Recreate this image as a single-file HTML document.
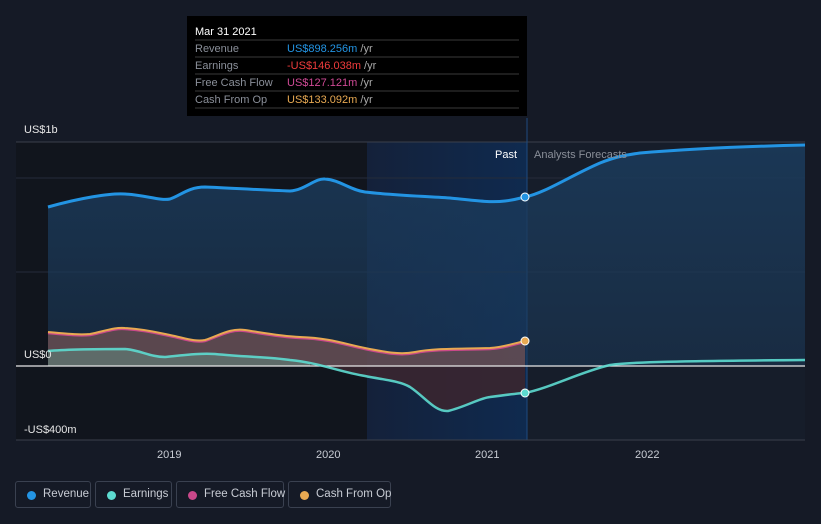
<!DOCTYPE html><html><head><style>
body{margin:0;background:#151a26;font-family:"Liberation Sans",sans-serif;}
.lg{position:absolute;top:481px;height:27px;border:1px solid #3a4150;border-radius:3px;box-sizing:border-box;color:#c8ccd4;font-size:11.5px;line-height:25px;padding-left:27px;white-space:nowrap}
.lg i{position:absolute;left:11px;top:9px;width:9px;height:9px;border-radius:50%}
</style></head><body>
<svg width="821" height="524" style="position:absolute;left:0;top:0" font-family="Liberation Sans, sans-serif">
<defs>
<linearGradient id="hl" x1="0" x2="1"><stop offset="0" stop-color="#14213a"/><stop offset="1" stop-color="#0f2a4f"/></linearGradient>
<linearGradient id="rv" x1="0" y1="0" x2="0" y2="1"><stop offset="0" stop-color="#1b3a5a" stop-opacity=".9"/><stop offset="1" stop-color="#1b3a5a" stop-opacity=".5"/></linearGradient>
</defs>
<rect width="821" height="524" fill="#151a26"/>
<rect x="16" y="142" width="351" height="298" fill="#11151d"/>
<rect x="367" y="142" width="160" height="298" fill="url(#hl)"/>
<rect x="527" y="142" width="278" height="298" fill="#161d2a"/>
<line x1="16" y1="142" x2="805" y2="142" stroke="#3a404c"/>
<line x1="16" y1="178" x2="805" y2="178" stroke="#252c3a"/>
<line x1="16" y1="272" x2="805" y2="272" stroke="#252c3a"/>
<line x1="527" y1="118" x2="527" y2="440" stroke="#1e4a80"/>
<path d="M48,207 C80,198 110,193 125,194 C145,195 160,201 170,199 C180,196 188,187 205,187 C230,188 260,190 290,191 C305,190 315,178 325,179 C340,180 350,190 365,192 C390,195 420,196 450,198 C470,200 490,203 505,201 C515,200 520,198 525,197 C545,193 570,176 600,163 C615,157 625,155 640,153 C700,148 760,146 805,145 L805,366 L48,366Z" fill="url(#rv)"/>
<path d="M48,332 C70,334 80,335 90,334 C105,331 115,327 125,328 C145,329 160,333 170,335 C185,338 195,342 205,340 C220,335 230,328 245,330 C265,333 280,336 300,337 C330,338 345,344 365,348 C385,352 400,355 415,352 C435,348 460,349 490,348 C505,347 515,343 525,341 L525,366 L48,366Z" fill="#6b4f52" opacity=".8"/>
<path d="M48,351 C70,349 100,349 125,349 C140,350 150,357 165,357 C185,355 200,353 215,354 C245,357 270,357 290,360 C300,361 305,362 310,363 L310,366 L48,366Z" fill="#5f7470" opacity=".8"/>
<path d="M310,363 C320,365 340,372 365,376 C385,380 400,381 410,387 C425,397 435,412 448,411 C465,407 480,398 490,397 C505,395 520,393 525,393 L525,366 L310,366Z" fill="#3a2630" opacity=".9"/>
<line x1="16" y1="366" x2="805" y2="366" stroke="#e8e8e8" stroke-width="1.3"/>
<path d="M48,207 C80,198 110,193 125,194 C145,195 160,201 170,199 C180,196 188,187 205,187 C230,188 260,190 290,191 C305,190 315,178 325,179 C340,180 350,190 365,192 C390,195 420,196 450,198 C470,200 490,203 505,201 C515,200 520,198 525,197 C545,193 570,176 600,163 C615,157 625,155 640,153 C700,148 760,146 805,145" fill="none" stroke="#2394e3" stroke-width="3"/>
<path d="M48,351 C70,349 100,349 125,349 C140,350 150,357 165,357 C185,355 200,353 215,354 C245,357 270,357 290,360 C320,363 340,372 365,376 C385,380 400,381 410,387 C425,397 435,412 448,411 C465,407 480,398 490,397 C505,395 520,393 525,393 C550,388 580,372 610,365 C630,362 680,361 805,360" fill="none" stroke="#5ddbd0" stroke-width="2.5" opacity=".9"/>
<path d="M48,333 C70,335 80,336 90,335 C105,332 115,328 125,329 C145,330 160,334 170,336 C185,339 195,343 205,341 C220,336 230,329 245,331 C265,334 280,337 300,338 C330,339 345,345 365,349 C385,353 400,356 415,353 C435,349 460,350 490,349 C505,348 515,344 525,342" fill="none" stroke="#c9488a" stroke-width="2.5"/>
<path d="M48,332 C70,334 80,335 90,334 C105,331 115,327 125,328 C145,329 160,333 170,335 C185,338 195,342 205,340 C220,335 230,328 245,330 C265,333 280,336 300,337 C330,338 345,344 365,348 C385,352 400,355 415,352 C435,348 460,349 490,348 C505,347 515,343 525,341" fill="none" stroke="#e8a952" stroke-width="2"/>
<circle cx="525" cy="197" r="4" fill="#2394e3" stroke="#fff" stroke-width="1"/>
<circle cx="525" cy="393" r="4" fill="#5ddbd0" stroke="#fff" stroke-width="1"/>
<circle cx="525" cy="341" r="4" fill="#e8a952" stroke="#fff" stroke-width="1"/>
<line x1="16" y1="440" x2="805" y2="440" stroke="#3a404c"/>
<g fill="#c8ccd4" font-size="11"><text x="157" y="458">2019</text><text x="316" y="458">2020</text><text x="475" y="458">2021</text><text x="635" y="458">2022</text></g>
<g fill="#e6e6e6" font-size="11"><text x="24" y="133">US$1b</text><text x="24" y="358">US$0</text><text x="24" y="433">-US$400m</text></g>
<text x="495" y="158" fill="#fff" font-size="11">Past</text>
<text x="534" y="158" fill="#8a8f99" font-size="11">Analysts Forecasts</text>
<rect x="187" y="16" width="340" height="100" fill="#000"/>
<text x="195" y="35" fill="#fff" font-size="11">Mar 31 2021</text>
<g stroke="#3a3a3a"><line x1="195" y1="40" x2="519" y2="40"/><line x1="195" y1="57" x2="519" y2="57"/><line x1="195" y1="74" x2="519" y2="74"/><line x1="195" y1="91" x2="519" y2="91"/><line x1="195" y1="108" x2="519" y2="108"/></g>
<g font-size="11" fill="#8a8f99"><text x="195" y="52">Revenue</text><text x="195" y="69">Earnings</text><text x="195" y="86">Free Cash Flow</text><text x="195" y="103">Cash From Op</text></g>
<g font-size="11"><text x="287" y="52" fill="#2394e3">US$898.256m <tspan fill="#aaa">/yr</tspan></text>
<text x="287" y="69" fill="#f03c3c">-US$146.038m <tspan fill="#aaa">/yr</tspan></text>
<text x="287" y="86" fill="#d04a96">US$127.121m <tspan fill="#aaa">/yr</tspan></text>
<text x="287" y="103" fill="#e8a952">US$133.092m <tspan fill="#aaa">/yr</tspan></text></g>
</svg>
<div class="lg" style="left:15px;width:76px"><i style="background:#2394e3"></i>Revenue</div>
<div class="lg" style="left:95px;width:77px"><i style="background:#5ddbd0"></i>Earnings</div>
<div class="lg" style="left:176px;width:108px"><i style="background:#c9488a"></i>Free Cash Flow</div>
<div class="lg" style="left:288px;width:103px"><i style="background:#e8a952"></i>Cash From Op</div>
</body></html>
